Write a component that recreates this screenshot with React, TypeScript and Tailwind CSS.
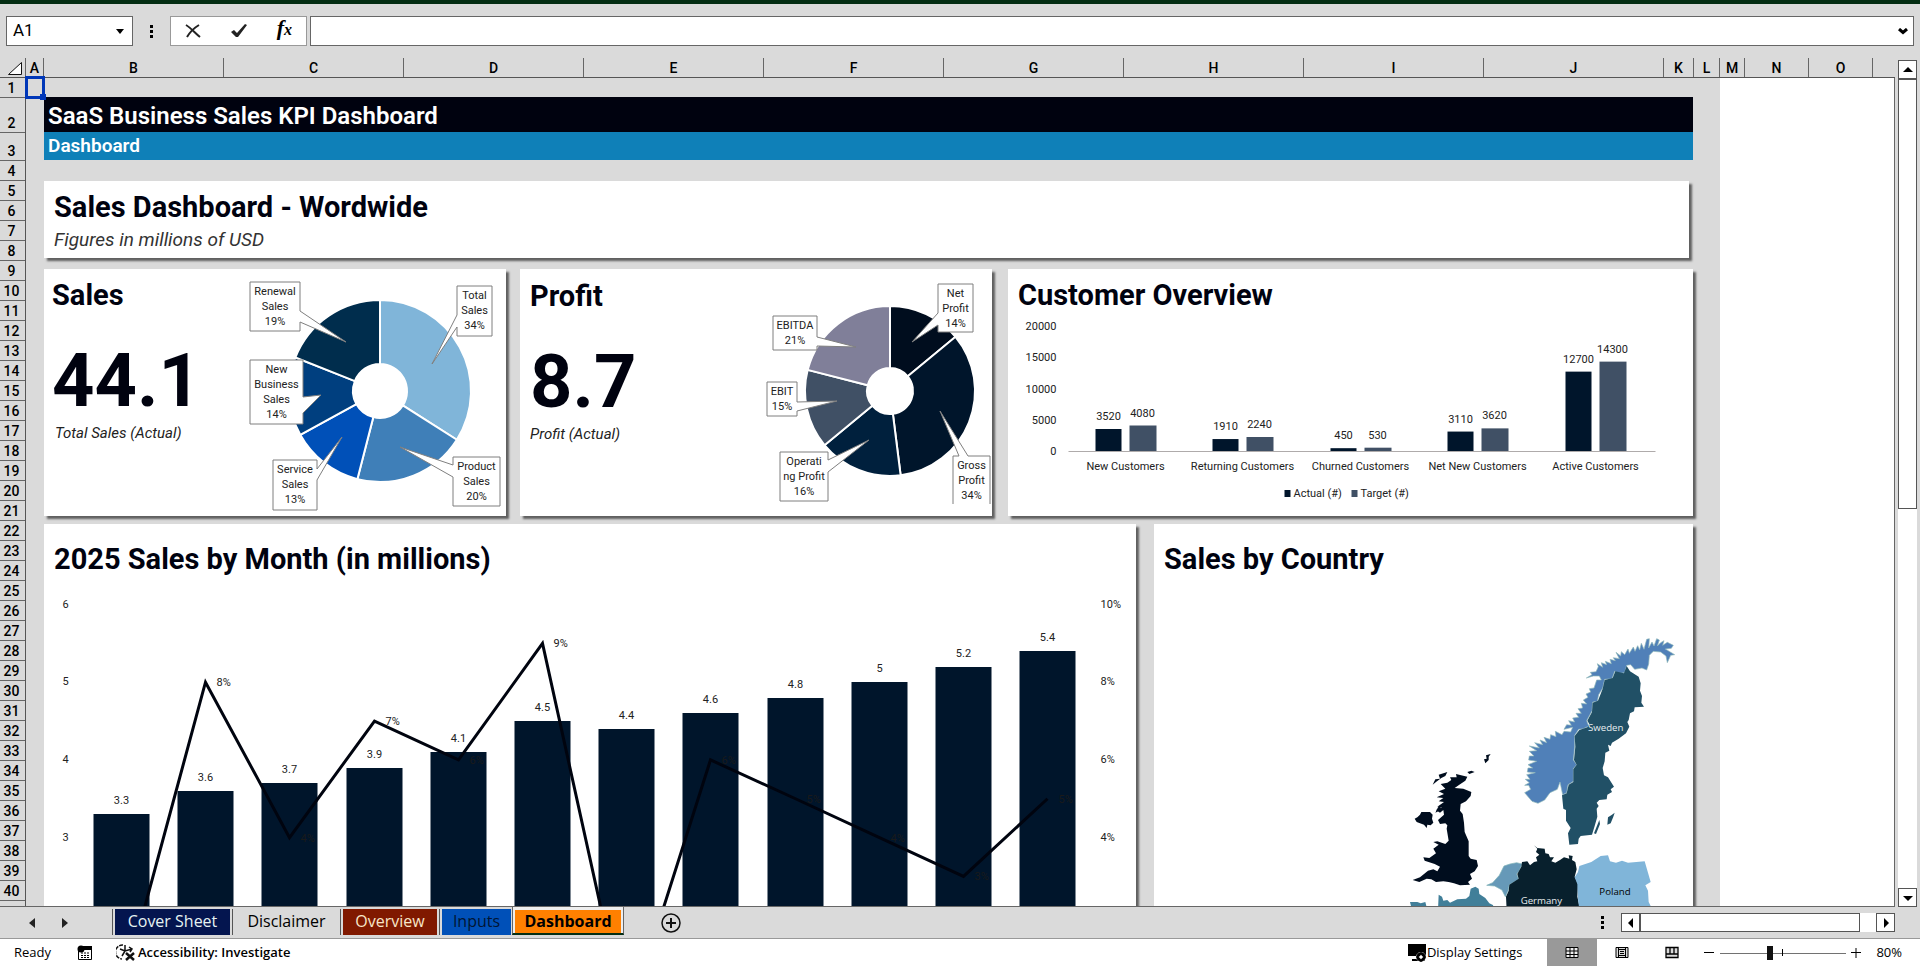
import type { ReactNode } from "react";

type Slice = {
  share: number;
  color: string;
};

type Callout = {
  lines: string[];
  x: number;
  y: number;
  w: number;
  h: number;
  outline: string;
};

const COLUMNS = [
  { name: "A", width: 18 },
  { name: "B", width: 180 },
  { name: "C", width: 180 },
  { name: "D", width: 180 },
  { name: "E", width: 180 },
  { name: "F", width: 180 },
  { name: "G", width: 180 },
  { name: "H", width: 180 },
  { name: "I", width: 180 },
  { name: "J", width: 180 },
  { name: "K", width: 30 },
  { name: "L", width: 26 },
  { name: "M", width: 25 },
  { name: "N", width: 64 },
  { name: "O", width: 64 },
];

const ROWS = Array.from({ length: 40 }, (_, i) => ({
  name: i + 1,
  height: i === 1 ? 35 : i === 2 ? 28 : 20,
}));

const SALES_SLICES: Slice[] = [
  { share: 34, color: "#80b5d9" },
  { share: 20, color: "#3f7fb8" },
  { share: 13, color: "#0050b8" },
  { share: 14, color: "#003f7f" },
  { share: 19, color: "#002d4d" },
];

const SALES_CALLOUTS: Callout[] = [
  { lines: ["Renewal", "Sales", "19%"], x: 7, y: 13, w: 50, h: 49, outline: "M7 13H57V42L103 73L57 53V62H7Z" },
  { lines: ["Total", "Sales", "34%"], x: 214, y: 17, w: 35, h: 50, outline: "M214 17H249V67H214V58L189 95L214 46Z" },
  { lines: ["New", "Business", "Sales", "14%"], x: 7, y: 91, w: 53, h: 64, outline: "M7 91H60V128L78 126L60 144V155H7Z" },
  { lines: ["Service", "Sales", "13%"], x: 30, y: 191, w: 44, h: 50, outline: "M30 191H74V200L99 168L74 211V241H30Z" },
  { lines: ["Product", "Sales", "20%"], x: 210, y: 188, w: 47, h: 49, outline: "M210 188H257V237H210V208L157 178L210 196Z" },
];

const PROFIT_SLICES: Slice[] = [
  { share: 14, color: "#000d1e" },
  { share: 34, color: "#00152b" },
  { share: 16, color: "#00203d" },
  { share: 15, color: "#405065" },
  { share: 21, color: "#807f99" },
];

const PROFIT_CALLOUTS: Callout[] = [
  { lines: ["Net", "Profit", "14%"], x: 195, y: 15, w: 35, h: 48, outline: "M195 15H230V63H195V56L169 73L195 44Z" },
  { lines: ["EBITDA", "21%"], x: 30, y: 47, w: 44, h: 34, outline: "M30 47H74V68L113 78L74 77V81H30Z" },
  { lines: ["EBIT", "15%"], x: 24, y: 113, w: 30, h: 34, outline: "M24 113H54V133L94 132L54 142V147H24Z" },
  { lines: ["Operati", "ng Profit", "16%"], x: 37, y: 183, w: 48, h: 49, outline: "M37 183H85V191L126 171L85 203V232H37Z" },
  { lines: ["Gross", "Profit", "34%"], x: 210, y: 187, w: 37, h: 48, outline: "M210 235V187H216L197 142L225 187H247V235" },
];

const CUSTOMERS = [
  { name: "New Customers", actual: 3520, target: 4080 },
  { name: "Returning Customers", actual: 1910, target: 2240 },
  { name: "Churned Customers", actual: 450, target: 530 },
  { name: "Net New Customers", actual: 3110, target: 3620 },
  { name: "Active Customers", actual: 12700, target: 14300 },
];

const MONTHS = [
  { sales: 3.3, growth: 0 },
  { sales: 3.6, growth: 8 },
  { sales: 3.7, growth: 4 },
  { sales: 3.9, growth: 7 },
  { sales: 4.1, growth: 6 },
  { sales: 4.5, growth: 9 },
  { sales: 4.4, growth: -0.8 },
  { sales: 4.6, growth: 6 },
  { sales: 4.8, growth: 5 },
  { sales: 5, growth: 4 },
  { sales: 5.2, growth: 3 },
  { sales: 5.4, growth: 5 },
];

function slicePath(cx: number, cy: number, outer: number, inner: number, from: number, to: number) {
  const a = (from / 100) * Math.PI * 2;
  const b = (to / 100) * Math.PI * 2;
  const at = (r: number, t: number) => `${cx + r * Math.sin(t)} ${cy - r * Math.cos(t)}`;
  return `M${at(outer, a)}A${outer} ${outer} 0 0 1 ${at(outer, b)}L${at(inner, b)}A${inner} ${inner} 0 0 0 ${at(inner, a)}Z`;
}

function Donut({
  slices,
  callouts,
  cx,
  cy,
  outer,
  inner,
  label,
}: {
  slices: Slice[];
  callouts: Callout[];
  cx: number;
  cy: number;
  outer: number;
  inner: number;
  label: string;
}) {
  let start = 0;
  return (
    <svg viewBox="0 0 262 247" className="h-[247px] w-[262px] shrink-0" role="img" aria-label={label}>
      {slices.map((s) => {
        const from = start;
        start += s.share;
        return (
          <path
            key={s.color}
            d={slicePath(cx, cy, outer, inner, from, start)}
            fill={s.color}
            stroke="#fff"
            strokeWidth="2"
          />
        );
      })}
      {callouts.map((c) => (
        <g key={c.lines.join(" ")}>
          <path d={c.outline} fill="#fff" stroke="#7f7f7f" strokeWidth="1" />
          {c.lines.map((line, i) => (
            <text
              key={line}
              x={c.x + c.w / 2}
              y={c.y + 13 + i * 15}
              textAnchor="middle"
              fontSize="11"
              fill="#222"
            >
              {line}
            </text>
          ))}
        </g>
      ))}
    </svg>
  );
}

function CustomerChart() {
  const base = 131;
  const y = (v: number) => (v / 20000) * 125;
  return (
    <svg viewBox="0 0 684 196" className="h-[196px] w-full" fontSize="11" fill="#222" role="img" aria-label="Customer overview">
      {[20000, 15000, 10000, 5000, 0].map((v) => (
        <text key={v} x="48" y={base + 4 - y(v)} textAnchor="end">
          {v}
        </text>
      ))}
      {CUSTOMERS.map((c, i) => {
        const x = Math.round(59 + i * 117.4);
        return (
          <g key={c.name} textAnchor="middle">
            <rect x={x + 28} y={base - y(c.actual)} width="26" height={y(c.actual)} fill="#00152b" />
            <rect x={x + 62} y={base - y(c.target)} width="27" height={y(c.target)} fill="#405065" />
            <text x={x + 41} y={base - 9 - y(c.actual)}>{c.actual}</text>
            <text x={x + 75} y={base - 9 - y(c.target)}>{c.target}</text>
            <text x={x + 58} y={base + 19}>{c.name}</text>
          </g>
        );
      })}
      <path d="M60 131.5H647" stroke="#afabab" />
      <rect x="276" y="170" width="6" height="7" fill="#00152b" />
      <text x="285" y="177">Actual (#)</text>
      <rect x="343" y="170" width="6" height="7" fill="#405065" />
      <text x="352" y="177">Target (#)</text>
    </svg>
  );
}

function MonthChart() {
  const ySales = (v: number) => Math.round(14.5 + (6 - v) * 77.7);
  const yGrowth = (v: number) => 14.5 + (10 - v) * 38.85;
  const center = (i: number) => Math.round(77 + i * 84.2);
  return (
    <svg viewBox="0 0 1091 326" className="h-[326px] w-full" fontSize="11" fill="#222" role="img" aria-label="Sales by month">
      {[6, 5, 4, 3].map((v) => (
        <text key={v} x="21" y={ySales(v) + 3} textAnchor="middle">
          {v}
        </text>
      ))}
      {[10, 8, 6, 4].map((v) => (
        <text key={v} x="1056" y={Math.round(yGrowth(v)) + 3}>
          {v}%
        </text>
      ))}
      {MONTHS.map((m, i) => (
        <g key={i}>
          <rect x={center(i) - 28} y={ySales(m.sales)} width="56" height={500} fill="#00152b" />
          <text x={center(i)} y={ySales(m.sales) - 10} textAnchor="middle">
            {m.sales}
          </text>
        </g>
      ))}
      <polyline
        points={MONTHS.map((m, i) => `${center(i)},${yGrowth(m.growth)}`).join(" ")}
        fill="none"
        stroke="#00040f"
        strokeWidth="3"
      />
      {MONTHS.map((m, i) =>
        m.growth > 0 ? (
          <text key={i} x={center(i) + 11} y={Math.round(yGrowth(m.growth)) + 4} fill="#1a1a1a">
            {m.growth}%
          </text>
        ) : null,
      )}
    </svg>
  );
}

function EuropeMap() {
  return (
    <svg viewBox="0 0 936 870" className="mr-px h-[290px] w-[312px] shrink-0 self-end" strokeLinejoin="round" role="img" aria-label="Map of Europe">
      {/* Norway */}
      <path
        d="M619 174L636 164L631 157L648 155L655 140L652 131L668 142L664 128L680 134L676 124L694 131L690 118L706 122L700 113L718 116L708 97L722 108L724 95L734 104L744 87L748 100L760 81L765 94L773 77L779 90L784 70L792 88L800 58L808 56L806 84L816 66L822 78L830 56L838 60L832 78L842 68L852 62L848 76L862 67L880 76L874 85L856 87L884 104L872 106L862 128L858 108L842 96L820 94L808 106L806 132L800 150L786 144L764 148L752 134L740 136L734 158L716 160L704 154L696 176L674 178L668 204L656 224L652 244L638 246L636 272L620 302L626 318L610 326L596 328L584 346L584 380L580 420L590 434L580 446L580 484L564 494L560 518L548 524L540 486L532 508L510 518L494 540L474 550L456 544L434 518L452 508L446 496L434 496L448 488L436 478L450 478L440 464L466 458L442 456L444 444L458 444L444 434L470 424L446 420L448 408L462 408L448 394L470 392L448 378L478 384L464 368L488 374L480 360L500 368L492 352L510 358L512 344L528 350L526 334L546 344L552 334L572 336L578 322L552 328L560 314L574 316L566 302L584 306L578 294L596 292L588 280L604 280L594 266L608 264L604 250L620 252L610 240L624 232L618 222L632 216L628 206L642 204L650 180L664 180L658 168L640 168Z"
        fill="#5080b8"
        stroke="#8fb8b8"
        strokeWidth="2"
      />
      {/* Sweden */}
      <path
        d="M740 138L750 154L776 170L782 190L780 212L786 228L784 248L792 260L764 262L762 274L750 280L746 300L742 306L748 320L738 340L716 356L696 368L692 378L684 374L688 392L676 398L674 424L668 444L672 466L684 472L702 500L692 508L696 516L682 524L680 538L658 540L650 548L656 558L650 566L652 590L644 618L636 644L602 648L596 656L594 672L568 674L564 640L572 624L558 602L558 570L550 566L546 526L560 520L566 494L580 486L580 448L590 434L582 420L586 380L584 348L598 330L622 322L628 312L622 302L636 276L638 248L654 242L668 206L674 180L698 174L706 154L732 160Z"
        fill="#215066"
      />
      <path d="M704 578L696 584L684 592L682 614L692 610L700 590ZM658 600L642 640L648 642L660 612Z" fill="#215066" />
      {/* United Kingdom */}
      <path
        d="M228 462L262 470L256 482L238 494L224 504L250 506L274 516L272 528L258 544L242 552L240 572L248 582L252 608L254 636L266 664L266 708L272 716L290 720L294 738L284 754L270 762L276 776L264 786L270 794L240 796L222 790L206 786L190 784L168 786L154 778L140 776L118 786L98 780L120 772L144 752L160 748L172 754L180 740L164 732L134 722L130 712L148 714L168 700L160 686L176 674L160 666L172 664L196 672L206 662L200 626L202 616L196 610L180 612L174 600L192 584L190 570L180 578L168 570L186 562L172 560L192 546L176 544L190 534L170 532L192 522L176 514L196 506L182 492L202 488L214 480L210 472L230 472Z"
        fill="#000d1e"
      />
      <path
        d="M104 596L112 592L120 584L124 576L150 576L158 584L156 596L160 608L152 616L142 614L140 624L132 614L110 606ZM158 494L166 478L180 476L176 464L202 456L196 468L184 474L168 486ZM332 402L318 406L320 416L312 418L316 430L326 420L326 410ZM262 456L274 452L284 456L268 462ZM166 578L178 572L184 558L174 562Z"
        fill="#000d1e"
      />
      {/* Netherlands and Belgium */}
      <path
        d="M372 738L390 732L410 728L426 732L418 752L410 762L416 778L388 794L384 812L376 830L366 810L344 798L320 796L338 788L358 766Z"
        fill="#6699b8"
        stroke="#80b3b8"
        strokeWidth="2"
      />
      {/* Germany */}
      <path
        d="M462 676L472 684L494 686L496 700L506 702L510 712L522 712L514 724L526 728L540 720L552 712L568 716L566 706L578 708L576 720L586 726L590 748L584 770L594 792L592 830L598 858V870H380L378 830L386 812L388 794L416 776L412 762L424 740L426 726L442 724L450 736L462 726L472 724L468 712L478 704L468 696L472 686Z"
        fill="#08202d"
      />
      {/* Poland */}
      <path
        d="M598 738L634 726L662 708L684 706L690 724L708 728L726 722L744 728L794 724L804 758L812 786L796 796L804 812L806 846L812 858V870H598L594 836L592 792L584 772L594 756Z"
        fill="#80b5d9"
      />
      {/* France */}
      <path
        d="M90 846L112 846L122 850L136 846L142 870H96ZM176 824L186 830L190 842L202 840L210 848L232 838L258 836L268 828L272 806L286 800L296 806L298 822L316 834L328 850L340 856L330 870H174Z"
        fill="#417f99"
      />
      <g fontSize="29" fontFamily="'Open Sans', sans-serif">
        <text x="624" y="333" fill="#e8eef0">Sweden</text>
        <text x="658" y="825" fill="#000">Poland</text>
        <text x="422" y="852" fill="#e8eef0">Germany</text>
      </g>
    </svg>
  );
}

function Card({ title, className = "", children }: { title: string; className?: string; children?: ReactNode }) {
  return (
    <section className={`bg-white shadow-[3px_3px_2px_#606060] ${className}`}>
      <h2 className="px-[10px] text-[29px] leading-8 font-bold">{title}</h2>
      {children}
    </section>
  );
}

function Dashboard() {
  return (
    <main className="w-[1694px] shrink-0 bg-[#dadada] pt-[19px] pr-[27px] pl-[18px] text-[#00020f]">
      <h1 className="h-[35px] bg-[#00020f] px-1 pt-[3px] text-[24px] leading-8 font-semibold text-white">
        SaaS Business Sales KPI Dashboard
      </h1>
      <p className="h-7 bg-[#0f80b8] px-1 text-[19px] leading-7 font-semibold text-white">Dashboard</p>

      <Card title="Sales Dashboard - Wordwide" className="mt-[21px] mr-1 h-[77px] pt-[10px]">
        <p className="px-[10px] pt-px text-[19px] leading-8 text-[#333] italic">Figures in millions of USD</p>
      </Card>

      <div className="mt-[11px] flex h-[247px]">
        <section className="mr-[14px] flex w-[462px] justify-between bg-white shadow-[3px_3px_2px_#606060]">
          <div className="px-2 pt-[10px]">
            <h2 className="text-[29px] leading-8 font-bold">Sales</h2>
            <p className="mt-7 text-[74px] leading-[84px] font-bold">44.1</p>
            <p className="px-[3px] text-[15px] leading-5 text-[#222] italic">Total Sales (Actual)</p>
          </div>
          <div className="mr-px">
            <Donut slices={SALES_SLICES} callouts={SALES_CALLOUTS} cx={137} cy={122} outer={91} inner={27} label="Sales breakdown" />
          </div>
        </section>
        <section className="mr-4 flex w-[472px] justify-between bg-white shadow-[3px_3px_2px_#606060]">
          <div className="px-[10px] pt-[11px]">
            <h2 className="text-[29px] leading-8 font-bold">Profit</h2>
            <p className="mt-7 text-[74px] leading-[84px] font-bold">8.7</p>
            <p className="text-[15px] leading-5 text-[#222] italic">Profit (Actual)</p>
          </div>
          <div className="-mr-[13px]">
            <Donut slices={PROFIT_SLICES} callouts={PROFIT_CALLOUTS} cx={147} cy={122} outer={85} inner={23} label="Profit breakdown" />
          </div>
        </section>
        <Card title="Customer Overview" className="flex-1 pt-[10px]">
          <div className="pt-[9px]">
            <CustomerChart />
          </div>
        </Card>
      </div>

      <div className="mt-2 flex items-stretch">
        <Card title="2025 Sales by Month (in millions)" className="mr-[18px] w-[1092px] pt-[19px]">
          <div className="pt-[15px]">
            <MonthChart />
          </div>
        </Card>
        <Card title="Sales by Country" className="flex flex-1 flex-col pt-[19px]">
          <div className="flex justify-end pt-[45px]">
            <EuropeMap />
          </div>
        </Card>
      </div>
    </main>
  );
}

function FormulaBar() {
  return (
    <div className="flex h-[54px] shrink-0 items-center border-t-4 border-[#032d12] px-[6px] pt-1">
      <div className="flex h-[30px] w-[127px] items-center border border-[#666] bg-white pr-1">
        <input aria-label="Name box" defaultValue="A1" className="w-full min-w-0 px-[6px] text-[17px] text-black outline-none" />
        <button type="button" aria-label="Show names" className="p-1">
          <svg viewBox="0 0 8 5" className="h-[5px] w-2"><path d="M0 0H8L4 5Z" /></svg>
        </button>
      </div>
      <svg viewBox="0 0 3 13" className="mx-[17px] h-[13px] w-[3px]"><path d="M0 0H3V3H0ZM0 5H3V8H0ZM0 10H3V13H0Z" /></svg>
      <div className="flex h-[30px] w-[137px] items-center justify-between border border-[#999] bg-white px-[14px]">
        <button type="button" aria-label="Cancel">
          <svg viewBox="0 0 16 14" className="h-[14px] w-4" fill="none" stroke="#222" strokeWidth="2"><path d="M1 1C6 4 10 9 15 13M14 1C9 4 5 8 2 13" /></svg>
        </button>
        <button type="button" aria-label="Enter">
          <svg viewBox="0 0 16 14" className="h-[14px] w-4"><path d="M0 8L3 6L6 9L14 0L16 1L7 13H5Z" fill="#222" /></svg>
        </button>
        <button type="button" aria-label="Insert function" className="pb-1 font-['Liberation_Serif',serif] text-[22px] leading-5 font-bold italic">
          f<span className="text-[16px]">x</span>
        </button>
      </div>
      <div className="ml-[3px] flex h-[30px] flex-1 items-center border border-[#666] bg-white pr-[5px]">
        <input aria-label="Formula" className="w-full px-2 text-[16px] outline-none" />
        <button type="button" aria-label="Expand formula bar">
          <svg viewBox="0 0 10 7" className="h-[7px] w-[10px]" fill="none" stroke="#000" strokeWidth="3"><path d="M1 1L5 4.5L9 1" /></svg>
        </button>
      </div>
    </div>
  );
}

function Grid() {
  return (
    <div className="relative flex min-w-0 flex-1 flex-col">
      <div className="flex h-5 shrink-0 border-b border-[#555] text-[14px] leading-[21px] font-medium text-black">
        <div className="flex w-[26px] shrink-0 items-end justify-end border-r border-[#666] pr-[3px] pb-[2px]">
          <svg viewBox="0 0 14 13" className="h-[13px] w-[14px]"><path d="M0.5 12.5L13.5 0.5V12.5Z" fill="#fff" stroke="#111" /></svg>
        </div>
        {COLUMNS.map((c) => (
          <div key={c.name} className="shrink-0 border-r border-[#666] text-center" style={{ width: c.width }}>
            {c.name}
          </div>
        ))}
      </div>
      <div className="flex min-h-0 flex-1 overflow-hidden border-r border-b border-[#666] bg-white">
        <div className="w-[26px] shrink-0 border-r border-[#555] bg-[#dadada] text-[14px] font-medium text-black">
          {ROWS.map((r) => (
            <div
              key={r.name}
              className="flex items-end justify-center border-b border-[#666] pr-[2px] leading-[18px]"
              style={{ height: r.height }}
            >
              {r.name}
            </div>
          ))}
        </div>
        <Dashboard />
      </div>
      {/* active cell */}
      <div className="absolute top-[18px] left-[25px] h-[23px] w-5 border-3 border-[#0037b8]">
        <span className="absolute -right-[4px] -bottom-[4px] size-[6px] bg-[#0037b8]" />
      </div>
    </div>
  );
}

function ScrollButton({ label, d }: { label: string; d: string }) {
  return (
    <button type="button" aria-label={label} className="flex size-[19px] shrink-0 items-center justify-center border border-[#555] bg-white">
      <svg viewBox="0 0 10 10" className="size-[10px]"><path d={d} /></svg>
    </button>
  );
}

function SheetTabs() {
  return (
    <div className="flex h-8 shrink-0 border-b border-[#999] pr-[25px] pl-[26px] font-['Open_Sans',sans-serif] text-[16px] leading-6 text-black">
      <div className="flex w-[86px] items-center gap-[23px] pl-px">
        <button type="button" aria-label="Previous sheet">
          <svg viewBox="0 0 10 10" className="size-[10px]"><path d="M8 0V10L2 5Z" fill="#222" /></svg>
        </button>
        <button type="button" aria-label="Next sheet">
          <svg viewBox="0 0 10 10" className="size-[10px]"><path d="M2 0V10L8 5Z" fill="#222" /></svg>
        </button>
      </div>
      <div className="flex">
        <div className="mt-[2px] h-[26px] border-l border-[#555] px-[2px]">
          <button type="button" className="h-[26px] w-[115px] bg-[#04154f] pb-[3px] text-[#e6f3f3]">Cover Sheet</button>
        </div>
        <div className="mt-[2px] h-[26px] border-l border-[#555] px-[2px]">
          <button type="button" className="h-[26px] w-[103px] pb-[3px]">Disclaimer</button>
        </div>
        <div className="mt-[2px] h-[26px] border-l border-[#555] px-[2px]">
          <button type="button" className="h-[26px] w-[94px] bg-[#801900] pb-[3px] text-[#f8e6c8]">Overview</button>
        </div>
        <div className="mt-[2px] h-[26px] border-l border-[#555] pl-[2px]">
          <button type="button" className="h-[26px] w-[69px] bg-[#0050b8] pb-[3px] text-[#001533]">Inputs</button>
        </div>
        <div className="ml-px h-7 border-r border-b-2 border-l border-[#666] border-b-[#032d12] bg-[#eee] px-[2px] pt-[2px]">
          <button type="button" className="h-[23px] w-[106px] bg-[#ff8000] pb-px leading-[22px] font-bold text-black">Dashboard</button>
        </div>
      </div>
      <button type="button" aria-label="New sheet" className="ml-[37px]">
        <svg viewBox="0 0 20 20" className="size-5" fill="none" stroke="#111" strokeWidth="1.5"><circle cx="10" cy="10" r="9" /><path d="M5 10H15M10 5V15" strokeWidth="2" /></svg>
      </button>
      <div className="ml-auto flex items-center">
        <svg viewBox="0 0 3 13" className="mr-[17px] h-[13px] w-[3px]"><path d="M0 0H3V3H0ZM0 5H3V8H0ZM0 10H3V13H0Z" /></svg>
        <div className="flex w-[274px] bg-white">
          <ScrollButton label="Scroll left" d="M7 0V10L2 5Z" />
          <div className="h-[19px] w-[220px] border border-[#555]" />
          <span className="flex-1" />
          <ScrollButton label="Scroll right" d="M3 0V10L8 5Z" />
        </div>
      </div>
    </div>
  );
}

function StatusBar() {
  return (
    <footer className="flex h-[27px] shrink-0 items-center bg-white pr-[18px] pl-[14px] font-['Open_Sans',sans-serif] text-[13px] text-black">
      <span>Ready</span>
      <button type="button" aria-label="Record macro" className="ml-[26px]">
        <svg viewBox="0 0 15 15" className="size-[15px]">
          <path d="M1.5 3V14.5H14.5V2.5H6" fill="#fff" stroke="#000" />
          <path d="M6 1H15V5H6Z" />
          <circle cx="4" cy="4" r="3.5" />
          <path d="M4 8H6M7 8H9M10 8H12M4 10.5H6M7 10.5H9M10 10.5H12M4 12.5H6M7 12.5H9M10 12.5H12" stroke="#000" />
        </svg>
      </button>
      <button type="button" className="ml-6 flex items-center gap-[3px] font-semibold">
        <svg viewBox="0 0 19 17" className="h-[17px] w-[19px]" fill="none" stroke="#111">
          <path d="M7 1A7 7 0 0 0 6 15" strokeWidth="1.5" strokeDasharray="4 1" />
          <path d="M9 1V7M4 5L9 7L16 5M13 3L16 5L14 8M9 7L6 12" strokeWidth="1.5" />
          <path d="M10 9L18 16M18 9L10 16" strokeWidth="2.5" />
        </svg>
        Accessibility: Investigate
      </button>
      <button type="button" className="ml-auto flex h-full items-center gap-px">
        <svg viewBox="0 0 18 18" className="size-[18px]">
          <path d="M0 0H18V12H0ZM4 15H10V17H4Z" />
          <circle cx="13" cy="13" r="5" fill="#fff" />
          <circle cx="13" cy="13" r="3.5" fill="none" stroke="#000" strokeWidth="2.5" />
          <path d="M13 8V18M8 13H18M9.5 9.5L16.5 16.5M16.5 9.5L9.5 16.5" stroke="#000" />
          <circle cx="13" cy="13" r="1.5" fill="#fff" />
        </svg>
        Display Settings
      </button>
      <div className="ml-[25px] flex h-full">
        <button type="button" aria-label="Normal view" className="flex w-[50px] items-center justify-center bg-[#999]">
          <svg viewBox="0 0 14 13" className="h-[13px] w-[14px]" fill="#eee" stroke="#000"><path d="M1 1.5H13V11.5H1ZM1 5H13M1 8.5H13M5 1.5V11.5M9 1.5V11.5" /></svg>
        </button>
        <button type="button" aria-label="Page layout view" className="flex w-[50px] items-center justify-center">
          <svg viewBox="0 0 14 13" className="h-[13px] w-[14px]" fill="#dadada" stroke="#000"><path d="M1 1.5H13V11.5H1ZM3.5 2V11M10.5 2V11M3.5 3.5H10.5M5 5.5H9M5 7.5H9M3.5 9.5H10.5" /></svg>
        </button>
        <button type="button" aria-label="Page break preview" className="flex w-[50px] items-center justify-center">
          <svg viewBox="0 0 14 13" className="h-[13px] w-[14px]" fill="#dadada" stroke="#000"><path d="M1 1.5H13V11.5H1ZM5 2V8H1M9 2V8H5M9 8H13" strokeWidth="1.3" /></svg>
        </button>
      </div>
      <button type="button" aria-label="Zoom out" className="ml-[7px]">
        <svg viewBox="0 0 10 10" className="size-[10px]" stroke="#000"><path d="M0 4.5H10" /></svg>
      </button>
      <div className="relative ml-[6px] flex items-center">
        <input
          type="range"
          aria-label="Zoom"
          defaultValue={39}
          className="h-[14px] w-[126px] appearance-none bg-linear-to-b from-transparent from-50% via-black via-50% to-transparent to-58% [&::-webkit-slider-thumb]:h-[14px] [&::-webkit-slider-thumb]:w-[6px] [&::-webkit-slider-thumb]:appearance-none [&::-webkit-slider-thumb]:bg-[#111]"
        />
        <span className="absolute left-[62px] h-[7px] w-px bg-black" />
      </div>
      <button type="button" aria-label="Zoom in" className="ml-[5px]">
        <svg viewBox="0 0 10 10" className="size-[10px]" stroke="#000"><path d="M0 4.5H10M5 0V10" /></svg>
      </button>
      <span className="ml-[15px]">80%</span>
    </footer>
  );
}

export default function App() {
  return (
    <div className="flex h-screen flex-col overflow-hidden bg-[#dadada] font-[Roboto,sans-serif]">
      <FormulaBar />
      <div className="flex min-h-0 flex-1 pt-1">
        <Grid />
        <div className="mr-[3px] ml-[3px] flex w-[19px] flex-col pt-[2px]">
          <ScrollButton label="Scroll up" d="M0 7H10L5 2Z" />
          <div className="h-[430px] border border-[#555] bg-white" />
          <div className="flex-1 bg-white" />
          <ScrollButton label="Scroll down" d="M0 3H10L5 8Z" />
        </div>
      </div>
      <SheetTabs />
      <StatusBar />
    </div>
  );
}
